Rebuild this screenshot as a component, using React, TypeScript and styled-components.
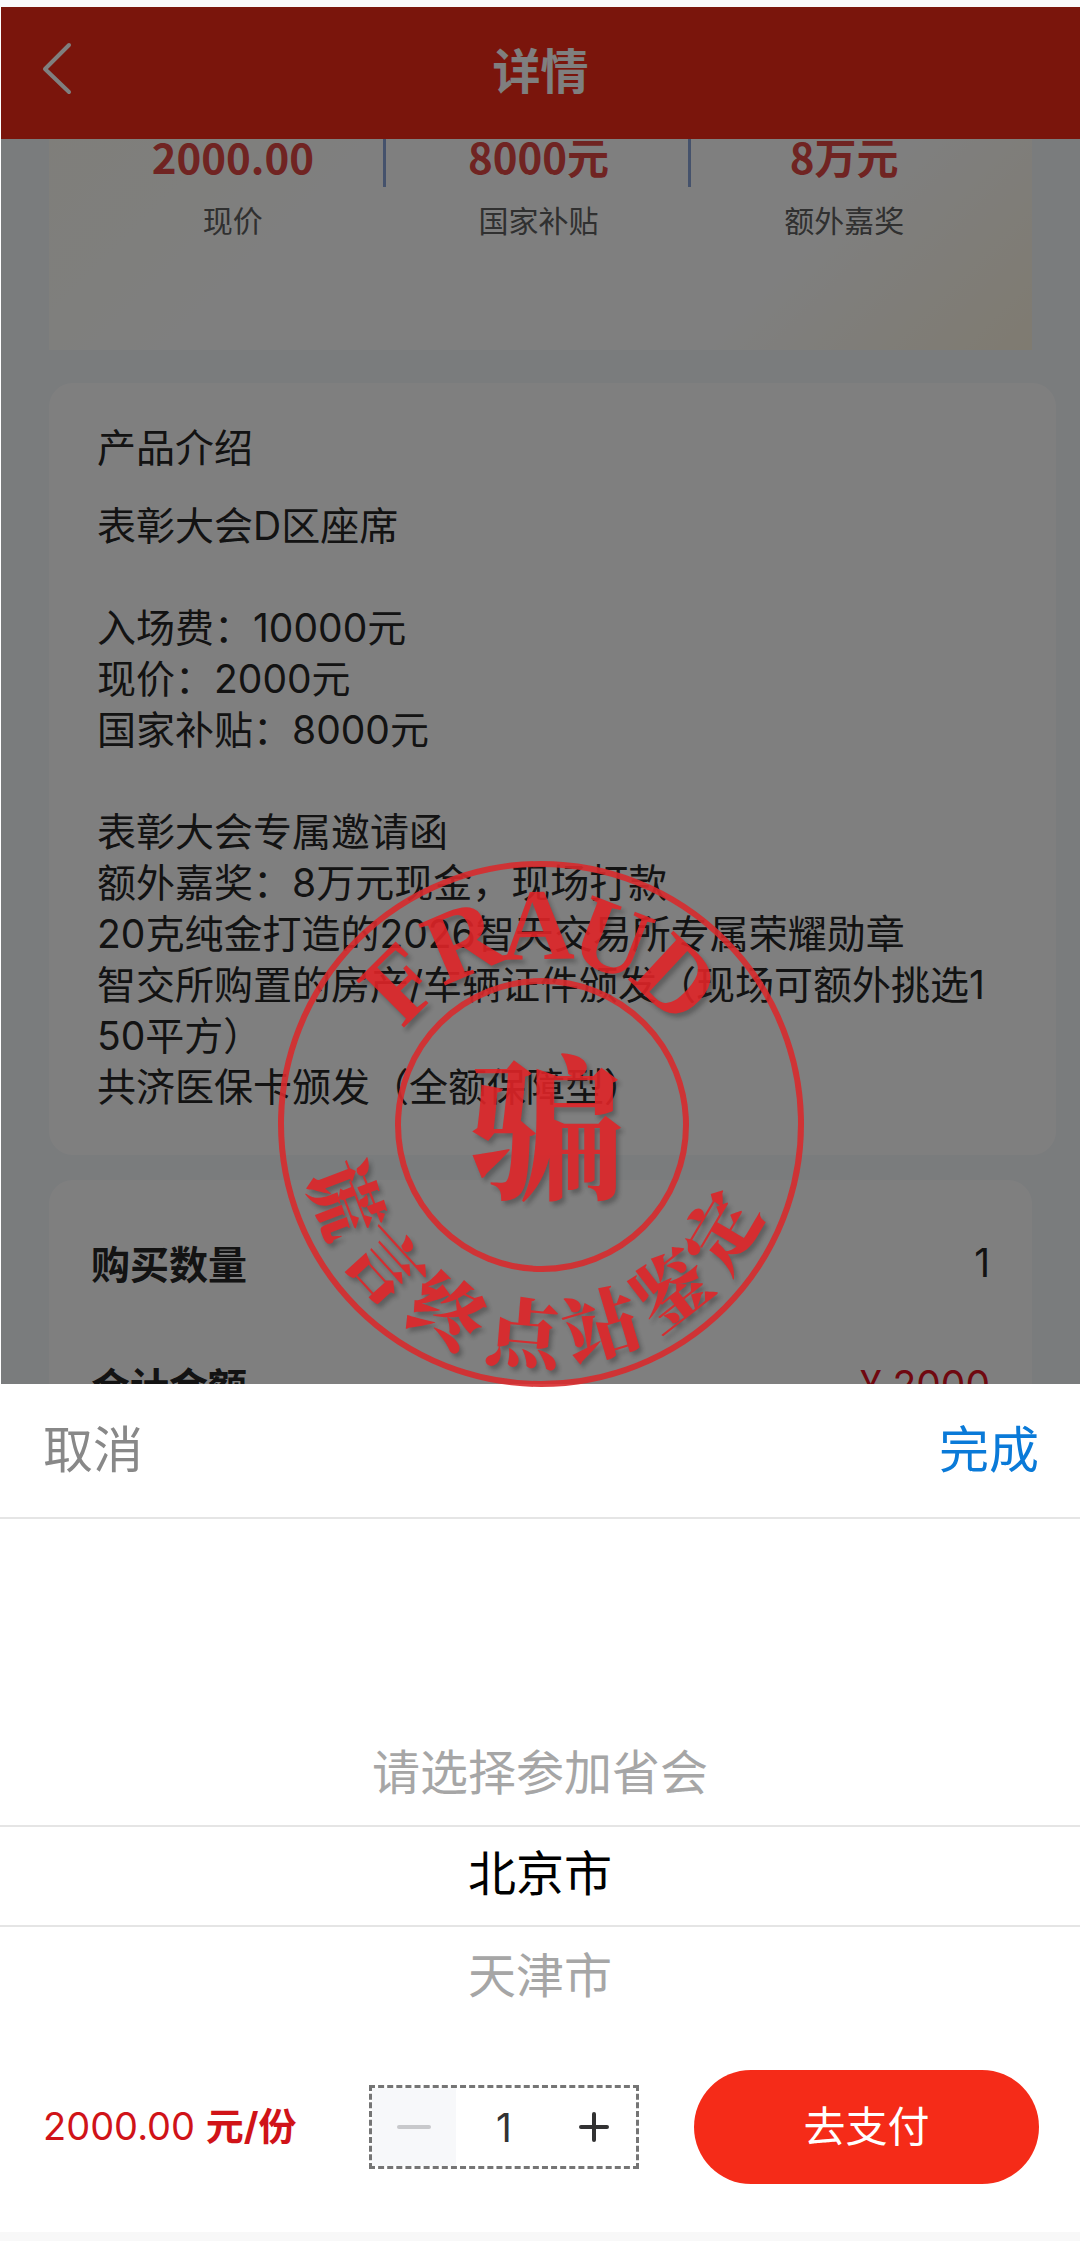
import React, { useState } from "react";
import styled, { createGlobalStyle, css } from "styled-components";

const GlobalStyle = createGlobalStyle`
  *, *::before, *::after { box-sizing: border-box; }
  body {
    margin: 0;
    background: #f8f8f8;
    font-family: Inter, "Noto Sans CJK SC", sans-serif;
  }
  button, input { font: inherit; color: inherit; }
  button { border: 0; padding: 0; background: none; cursor: pointer; }
  h1, h2, p, ul, dl, dd { margin: 0; padding: 0; }
`;

const Screen = styled.div`
  position: relative;
  display: flex;
  flex-direction: column;
  min-height: 100vh;
  padding-bottom: 9px;
  overflow: hidden;
`;

const StatusStrip = styled.div`
  height: 7px;
  background: #f8f9fb;
`;

const Backdrop = styled.div`
  position: relative;
  flex: 1 1 0;
  min-height: 0;
  display: flex;
  flex-direction: column;
  overflow: hidden;
  background: #f5f8fb;
  border-left: 1px solid #ffffff;
`;

const Dim = styled.div`
  position: absolute;
  inset: 0;
  background: rgba(0, 0, 0, 0.5);
`;

const Header = styled.header`
  display: grid;
  grid-template-columns: 114px 1fr 114px;
  align-items: center;
  flex: none;
  height: 132px;
  padding-bottom: 2px;
  background: #f52b18;
  color: #ffffff;
  text-align: center;
`;

const BackButton = styled.button`
  display: flex;
  align-items: center;
  height: 60px;
  padding: 0 0 8px 39px;
`;

const Title = styled.h1`
  font-size: 48px;
  line-height: 60px;
  font-weight: 700;
`;

const Content = styled.main`
  flex: 1 1 0;
  min-height: 0;
  padding: 0 24px 0 48px;
  overflow: hidden;
`;

const Card = styled.section<{ $wide?: boolean }>`
  margin-right: ${(p) => (p.$wide ? 0 : 24)}px;
  margin-bottom: 25px;
  border-radius: 24px;
  background: #ffffff;
`;

const StatsCard = styled(Card)`
  display: flex;
  height: 211px;
  margin-bottom: 33px;
  padding: 0 35px 0 31px;
  border-radius: 0;
  background: linear-gradient(135deg, #fffdf5 0%, #ffffff 30%, #ffffff 72%, #fff6e2 100%);
`;

const Stat = styled.div`
  flex: 1;
  display: flex;
  flex-direction: column-reverse;
  justify-content: flex-end;
  gap: 33px;
  background: linear-gradient(#8ba4d8, #8ba4d8) right top / 3px 48px no-repeat;
  text-align: center;
  &:last-child { background: none; }
`;

const StatValue = styled.dd`
  color: #e04844;
  font-family: "Noto Sans CJK SC", sans-serif;
  font-size: 42px;
  line-height: 34px;
  font-weight: 700;
`;

const StatLabel = styled.dt`
  color: #606060;
  font-size: 30px;
  line-height: 30px;
`;

const IntroCard = styled(Card)`
  padding: 39px 48px 43px;
  color: #262626;
  font-size: 39px;
  line-height: 51px;
`;

const IntroTitle = styled.h2`
  margin-bottom: 27px;
  font-size: 39px;
  line-height: 51px;
  font-weight: 400;
`;

const IntroText = styled.p`
  white-space: pre-wrap;
  word-break: break-all;
`;

const OrderCard = styled(Card)`
  padding: 21px 42px;
`;

const OrderRow = styled.div`
  display: flex;
  align-items: center;
  justify-content: space-between;
  height: 122px;
  color: #262626;
  font-size: 39px;
`;

const OrderLabel = styled.dt`
  font-weight: 700;
`;

const OrderValue = styled.dd<{ $accent?: boolean }>`
  color: ${(p) => (p.$accent ? "#e01020" : "inherit")};
`;

const Sheet = styled.section`
  flex: none;
  background: #ffffff;
`;

const SheetActions = styled.div`
  display: flex;
  align-items: center;
  justify-content: space-between;
  height: 135px;
  padding: 0 41px 2px 43px;
  border-bottom: 2px solid #e5e5e5;
`;

const TextButton = styled.button<{ $primary?: boolean }>`
  color: ${(p) => (p.$primary ? "#0a7ad8" : "#888888")};
  font-size: 50px;
  line-height: 70px;
`;

const Picker = styled.ul`
  list-style: none;
  padding-top: 205px;
`;

const PickerOption = styled.li<{ $selected?: boolean }>`
  display: flex;
  justify-content: center;
  ${(p) =>
    p.$selected &&
    css`
      border-top: 2px solid #e5e5e5;
      border-bottom: 2px solid #e5e5e5;
    `}
`;

const OptionButton = styled.button<{ $selected?: boolean }>`
  width: 100%;
  height: ${(p) => (p.$selected ? 98 : 101)}px;
  padding-bottom: 4px;
  color: ${(p) => (p.$selected ? "#000000" : "#a6a6a6")};
  font-size: 48px;
  line-height: 90px;
`;

const BuyBar = styled.div`
  display: flex;
  align-items: center;
  justify-content: space-between;
  height: 204px;
  padding: 0 41px 6px 43px;
  background: #ffffff;
`;

const Price = styled.p`
  width: 271px;
  padding-bottom: 2px;
  color: #d01318;
  font-size: 38px;
  line-height: 50px;
  white-space: nowrap;
`;

const Stepper = styled.div`
  display: grid;
  grid-template-columns: 84px 1fr 84px;
  width: 270px;
  height: 84px;
  border: 3px dashed #757575;
`;

const StepButton = styled.button`
  display: flex;
  align-items: center;
  justify-content: center;
  color: #323233;
  &:disabled { color: #c8c9cc; background: #f7f8fa; cursor: default; }
`;

const Quantity = styled.input`
  width: 100%;
  min-width: 0;
  padding: 0;
  border: 0;
  outline: 0;
  background: transparent;
  color: #323233;
  font-size: 39px;
  text-align: center;
`;

const PayButton = styled.button`
  width: 345px;
  height: 114px;
  padding-bottom: 8px;
  border-radius: 57px;
  background: #f52b18;
  color: #ffffff;
  font-size: 42px;
`;

const Stamp = styled.svg`
  position: absolute;
  left: 50%;
  top: 861px;
  width: 526px;
  height: 526px;
  margin-left: -262px;
  overflow: visible;
  pointer-events: none;
  opacity: 0.9;
`;

const StampText = styled.g`
  fill: #df2427;
  text-anchor: middle;
  filter: drop-shadow(3px 4px 2px rgba(40, 40, 40, 0.4));
`;

const STATS = [
  { value: "2000.00", label: "现价" },
  { value: "8000元", label: "国家补贴" },
  { value: "8万元", label: "额外嘉奖" },
];

const INTRO = `表彰大会D区座席

入场费：10000元
现价：2000元
国家补贴：8000元

表彰大会专属邀请函
额外嘉奖：8万元现金，现场打款
20克纯金打造的2026智天交易所专属荣耀勋章
智交所购置的房产/车辆证件颁发（现场可额外挑选150平方）
共济医保卡颁发（全额保障型）`;

const CITIES = ["请选择参加省会", "北京市", "天津市"];

function FraudStamp() {
  return (
    <Stamp viewBox="-263 -263 526 526" role="img" aria-label="FRAUD 骗 谎言终点站鉴定">
      <g fill="none" stroke="#d82b2d" strokeWidth="6">
        <circle r="260" />
        <circle cx="1" cy="1" r="144" />
      </g>
      <StampText>
        {[..."FRAUD"].map((letter, i) => (
          <text
            key={letter}
            transform={`rotate(${(i - 2) * 22 - 1})`}
            y="-165"
            fontFamily="'Liberation Serif', serif"
            fontWeight="700"
            fontSize="102"
          >
            {letter}
          </text>
        ))}
        {[..."谎言终点站鉴定"].map((letter, i) => (
          <text
            key={letter}
            transform={`rotate(${69 - i * 21.4})`}
            y="238"
            fontFamily="'Noto Serif CJK SC', 'Noto Sans CJK SC', serif"
            fontWeight="900"
            fontSize="75"
          >
            {letter}
          </text>
        ))}
        <text
          x="6"
          y="63"
          fontFamily="'Noto Serif CJK SC', 'Noto Sans CJK SC', serif"
          fontWeight="900"
          fontSize="154"
        >
          骗
        </text>
      </StampText>
    </Stamp>
  );
}

export default function App() {
  const [city, setCity] = useState("北京市");
  const [count, setCount] = useState(1);

  return (
    <Screen>
      <GlobalStyle />
      <StatusStrip />
      <Backdrop>
        <Header>
          <BackButton aria-label="返回">
            <svg width="32" height="54" viewBox="0 0 32 54" fill="none" stroke="currentColor" strokeWidth="4" strokeLinecap="round" strokeLinejoin="round">
              <path d="M29 4 5 28l24 23" />
            </svg>
          </BackButton>
          <Title>详情</Title>
        </Header>
        <Content>
          <StatsCard as="dl">
            {STATS.map((s) => (
              <Stat key={s.label}>
                <StatLabel>{s.label}</StatLabel>
                <StatValue>{s.value}</StatValue>
              </Stat>
            ))}
          </StatsCard>
          <IntroCard $wide>
            <IntroTitle>产品介绍</IntroTitle>
            <IntroText>{INTRO}</IntroText>
          </IntroCard>
          <OrderCard as="dl">
            <OrderRow>
              <OrderLabel>购买数量</OrderLabel>
              <OrderValue>{count}</OrderValue>
            </OrderRow>
            <OrderRow>
              <OrderLabel>合计金额</OrderLabel>
              <OrderValue $accent>¥ {count * 2000}</OrderValue>
            </OrderRow>
          </OrderCard>
        </Content>
        <Dim />
      </Backdrop>
      <Sheet>
        <SheetActions>
          <TextButton>取消</TextButton>
          <TextButton $primary>完成</TextButton>
        </SheetActions>
        <Picker>
          {CITIES.map((name) => (
            <PickerOption key={name} $selected={name === city}>
              <OptionButton $selected={name === city} onClick={() => setCity(name)}>
                {name}
              </OptionButton>
            </PickerOption>
          ))}
        </Picker>
        <BuyBar>
          <Price>
            2000.00 <b>元/份</b>
          </Price>
          <Stepper>
            <StepButton aria-label="减少" disabled={count <= 1} onClick={() => setCount(count - 1)}>
              <svg width="34" height="34" viewBox="0 0 34 34" stroke="currentColor" strokeWidth="4" strokeLinecap="round">
                <path d="M2 17h30" />
              </svg>
            </StepButton>
            <Quantity aria-label="数量" value={count} onChange={(e) => setCount(Number(e.target.value) || 1)} />
            <StepButton aria-label="增加" onClick={() => setCount(count + 1)}>
              <svg width="30" height="30" viewBox="0 0 30 30" stroke="currentColor" strokeWidth="4" strokeLinecap="round">
                <path d="M2 15h26M15 2v26" />
              </svg>
            </StepButton>
          </Stepper>
          <PayButton>去支付</PayButton>
        </BuyBar>
      </Sheet>
      <FraudStamp />
    </Screen>
  );
}
